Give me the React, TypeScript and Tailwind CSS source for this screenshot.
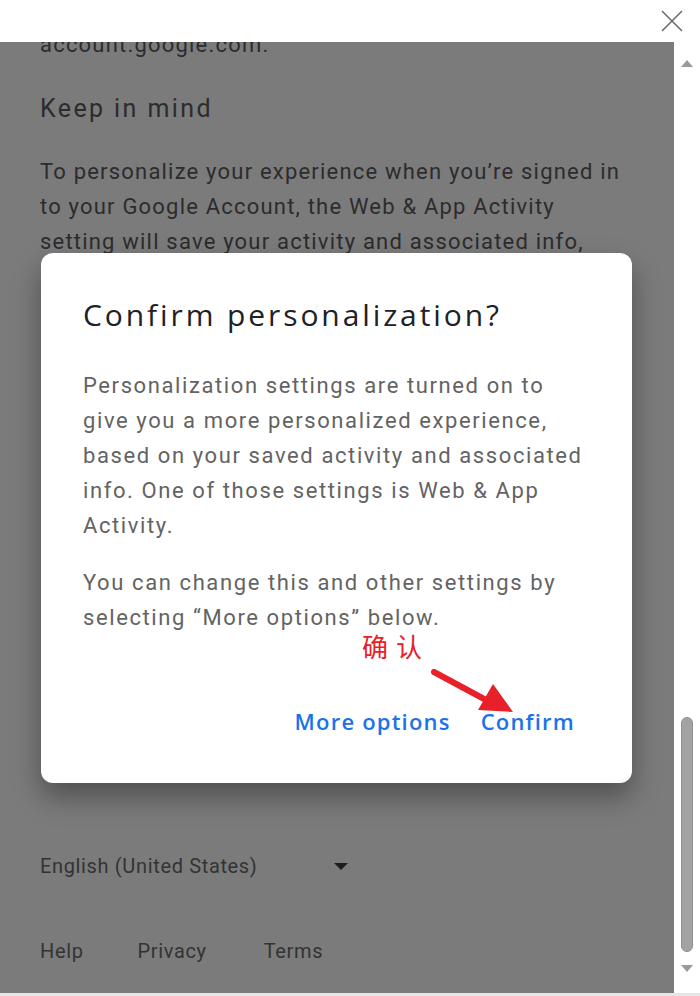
import React from 'react';

const roboto = { fontFamily: 'Roboto, "Liberation Sans", Arial, sans-serif' };
const gsans = { fontFamily: '"Open Sans", Roboto, "Liberation Sans", sans-serif' };

const CloseIcon = () => (
    <svg width="24" height="24" viewBox="0 0 24 24" className="text-[#6b6b6b]">
        <path d="M2 2 L22 22 M22 2 L2 22" stroke="currentColor" strokeWidth="1.6" fill="none" />
    </svg>
);

const RedArrow = () => (
    <svg width="100" height="60" viewBox="0 0 100 60" className="absolute left-[385px] top-[409px]">
        <path d="M8 10 L60 38" stroke="#e8202a" strokeWidth="6" strokeLinecap="round" fill="none" />
        <polygon points="87,50 52,48 67,22" fill="#e8202a" />
    </svg>
);

const ConfirmDialog = () => (
    <div className="absolute left-[41px] top-[211px] w-[591px] h-[530px] bg-white rounded-[12px] shadow-[0_14px_28px_rgba(0,0,0,0.35)]">
        <div className="pl-[42px] pr-[20px] pt-[40px]">
            <h2 className="text-[30px] leading-[44px] tracking-[2.9px] text-[#202124] whitespace-nowrap" style={gsans}>
                Confirm personalization?
            </h2>
            <div className="mt-[31px] text-[22px] leading-[35px] tracking-[1.6px] text-[#636363] whitespace-nowrap" style={roboto}>
                <p>
                    Personalization settings are turned on to
                    <br />
                    give you a more personalized experience,
                    <br />
                    based on your saved activity and associated
                    <br />
                    info. One of those settings is Web &amp; App
                    <br />
                    Activity.
                </p>
                <p className="mt-[22px]">
                    You can change this and other settings by
                    <br />
                    selecting “More options” below.
                </p>
            </div>
        </div>
        <div
            className="absolute left-[321px] top-[381px] text-[26px] leading-[24px] tracking-[8px] text-[#e8202a]"
            style={{ fontFamily: '"Noto Sans CJK SC", sans-serif' }}
        >
            确认
        </div>
        <RedArrow />
        <div className="absolute right-[57px] top-[452px] flex items-center gap-[30px] text-[22px] leading-[32px] tracking-[1.2px] font-semibold text-[#1a73e8]" style={gsans}>
            <span>More options</span>
            <span>Confirm</span>
        </div>
    </div>
);

const Scrollbar = () => (
    <div className="w-[26px] bg-white flex flex-col items-center">
        <div className="mt-[18px] w-0 h-0 border-l-[6px] border-r-[6px] border-b-[7px] border-l-transparent border-r-transparent border-b-[#9a9a9a]" />
        <div className="flex-1" />
        <div className="w-[12px] h-[235px] rounded-full bg-[#a3a3a3] border border-[#8f8f8f]" />
        <div className="mt-[13px] mb-[21px] w-0 h-0 border-l-[6px] border-r-[6px] border-t-[7px] border-l-transparent border-r-transparent border-t-[#9a9a9a]" />
    </div>
);

export default function App() {
    return (
        <div className="w-[700px] h-[996px] flex flex-col bg-white overflow-hidden">
            <div className="h-[42px] shrink-0 flex items-center justify-end pr-[16px] bg-white">
                <CloseIcon />
            </div>
            <div className="flex-1 flex min-h-0 border-b-[3px] border-[#e6e6e6]">
                <div className="relative flex-1 bg-[#7b7b7c] overflow-hidden flex flex-col px-[40px] text-[#2c2c2c]" style={roboto}>
                    <p className="-mt-[15px] text-[22px] leading-[35px] tracking-[1.2px]">account.google.com.</p>
                    <h3 className="mt-[30px] text-[25px] leading-[34px] tracking-[2.4px]">Keep in mind</h3>
                    <p className="mt-[28px] text-[22px] leading-[35px] tracking-[1.2px] whitespace-nowrap">
                        To personalize your experience when you’re signed in
                        <br />
                        to your Google Account, the Web &amp; App Activity
                        <br />
                        setting will save your activity and associated info,
                        <br />
                        like searches, locations and other data.
                    </p>
                    <div className="mt-auto flex items-center text-[20px] leading-[28px] tracking-[0.65px] text-[#333333]">
                        <span>English (United States)</span>
                        <span className="ml-[77px] w-0 h-0 border-l-[7px] border-r-[7px] border-t-[7px] border-l-transparent border-r-transparent border-t-[#1e1e1e]" />
                    </div>
                    <div className="mt-[57px] mb-[28px] flex items-center text-[20px] leading-[28px] tracking-[0.65px] text-[#333333]">
                        <span>Help</span>
                        <span className="ml-[54px]">Privacy</span>
                        <span className="ml-[57px]">Terms</span>
                    </div>
                    <ConfirmDialog />
                </div>
                <Scrollbar />
            </div>
        </div>
    );
}
